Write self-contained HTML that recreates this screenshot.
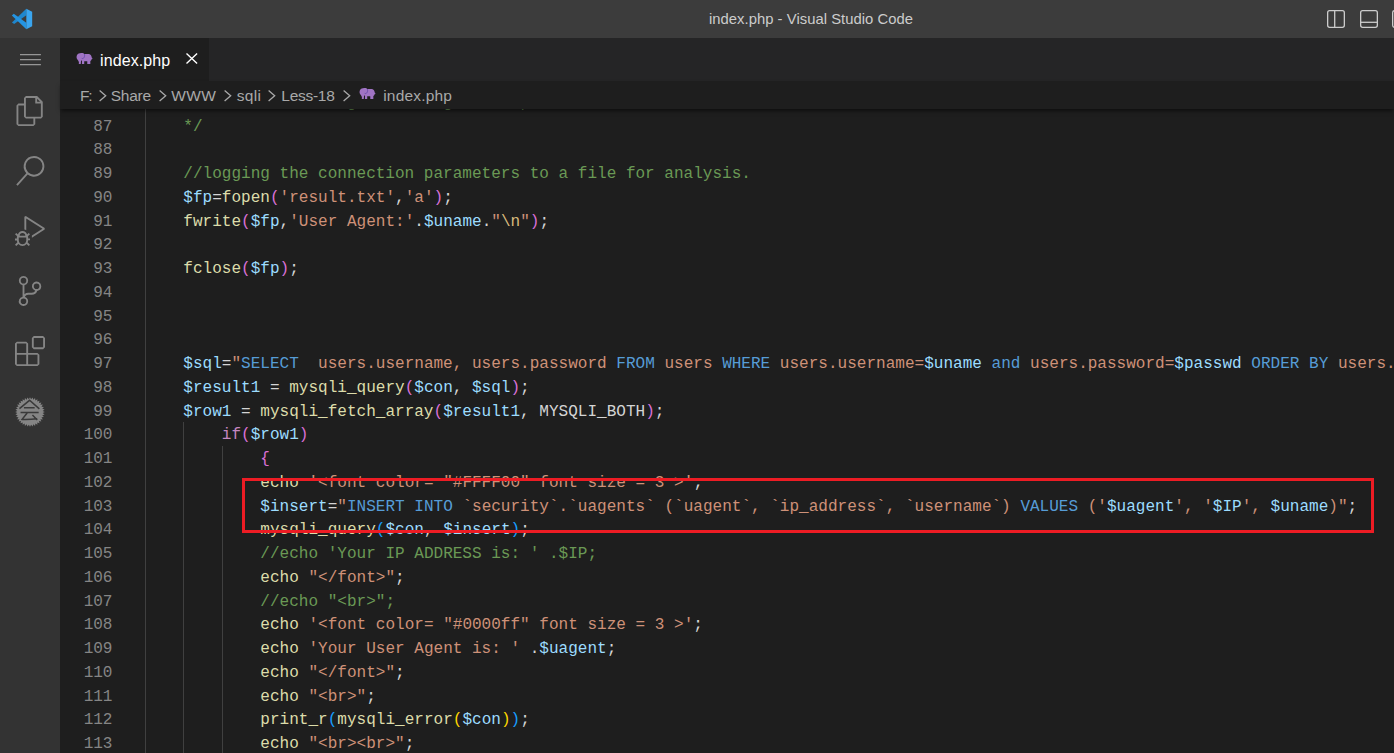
<!DOCTYPE html>
<html><head><meta charset="utf-8"><title>index.php - Visual Studio Code</title>
<style>
*{box-sizing:border-box;margin:0;padding:0}
html,body{width:1394px;height:753px;overflow:hidden;background:#1e1e1e}
body{position:relative;font-family:"Liberation Sans",sans-serif;color:#ccc}
#title{position:absolute;left:0;top:0;width:1394px;height:38px;background:#3c3c3c}
#title .t{position:absolute;left:0;width:1394px;top:10px;text-align:center;font-size:14.8px;letter-spacing:0.04px;line-height:18px;color:#cccccc;padding-left:228px}
#act{position:absolute;left:0;top:38px;width:60px;height:715px;background:#333333}
#tabs{position:absolute;left:60px;top:38px;width:1334px;height:43px;background:#252526}
#tab{position:absolute;left:0;top:0;width:149px;height:43px;background:#1e1e1e}
#tab .lbl{position:absolute;left:40px;top:13px;font-size:16px;letter-spacing:0.11px;line-height:20px;color:#ffffff}
#bc{position:absolute;left:60px;top:81px;width:1334px;height:28px;background:#1e1e1e;z-index:5;box-shadow:0 3px 4px -1px rgba(0,0,0,.55)}
#bc .i{position:absolute;top:5px;font-size:15.5px;line-height:20px;color:#a9a9a9;white-space:pre}
#ed{position:absolute;left:60px;top:109px;width:1334px;height:644px;background:#1e1e1e;overflow:hidden}
.ln{position:absolute;left:60px;width:52.5px;text-align:right;font-family:"Liberation Mono",monospace;font-size:16.044px;line-height:24px;height:24px;color:#858585;white-space:pre}
.cl{position:absolute;font-family:"Liberation Mono",monospace;font-size:16.044px;line-height:24px;height:24px;white-space:pre;color:#d4d4d4}
.v{color:#9cdcfe}.s{color:#ce9178}.k{color:#569cd6}.c{color:#6a9955}.p{color:#d4d4d4}
.e{color:#d7ba7d}.f{color:#dcdcaa}.kw{color:#c586c0}.b1{color:#ffd700}.b2{color:#da70d6}.b3{color:#179fff}
.g{position:absolute;width:1px;background:#404040}
#red{position:absolute;left:242px;top:478px;width:1132px;height:55px;border:3px solid #ed1c24;z-index:6}
svg{position:absolute;overflow:visible}
</style></head><body>
<div id="title">
<svg style="left:6px;top:4px" width="34" height="30" viewBox="0 0 853 753"><polygon points="510,120 510,283 205,502 148,462" fill="#1f86cd"/><polygon points="195,246 510,470 510,632 146,290" fill="#2494e2"/><polygon points="510,118 657,195 657,557 510,634" fill="#3aa5ef"/></svg>
<div class="t">index.php - Visual Studio Code</div>
<svg style="left:1327px;top:10px" width="18" height="18" viewBox="0 0 18 18" fill="none" stroke="#cccccc" stroke-width="1.3"><rect x="0.65" y="0.65" width="16.7" height="16.7" rx="2"/><path d="M7.7 0.65V17.35"/></svg>
<svg style="left:1360px;top:10px" width="18" height="18" viewBox="0 0 18 18" fill="none" stroke="#cccccc" stroke-width="1.3"><rect x="0.65" y="0.65" width="16.7" height="16.7" rx="2"/><path d="M0.65 12.3H17.35"/></svg>
<svg style="left:1392px;top:10px" width="18" height="18" viewBox="0 0 18 18" fill="none" stroke="#cccccc" stroke-width="1.3"><rect x="0.65" y="0.65" width="16.7" height="16.7" rx="2"/></svg>
</div>
<div id="act">
<svg style="left:19.5px;top:16px" width="21" height="12" viewBox="0 0 21 12"><path d="M0 0.7H20.9M0 5.7H20.9M0 10.7H20.9" stroke="#969696" stroke-width="1.25"/></svg>
<!-- files -->
<svg style="left:13.5px;top:58px" width="30" height="30" viewBox="0 0 24 24" fill="#858585"><path transform="translate(1 0)" d="M17.5 0h-9L7 1.5V6H2.5L1 7.5v15.07L2.5 24h12.07L16 22.57V18h4.7l1.3-1.43V4.5L17.5 0zm0 2.12l2.38 2.38H17.5V2.12zm-3 20.38h-12v-15H7v9.07L8.500 18h6v4.5zm6-6h-12v-15H16V6h4.5v10.5z"/></svg>
<!-- search -->
<svg style="left:15px;top:117.7px" width="30" height="30" viewBox="0 0 24 24" fill="#858585"><path d="M15.25 0a8.25 8.25 0 0 0-6.18 13.72L1 22.880l1.12 1 8.050-9.120A8.251 8.251 0 1 0 15.25.010V0zm0 15a6.75 6.75 0 1 1 0-13.5 6.75 6.75 0 0 1 0 13.5z"/></svg>
<!-- debug -->
<svg style="left:15px;top:178px" width="30" height="30" viewBox="0 0 24 24" fill="#858585"><path d="M10.94 13.5l-1.32 1.32a3.73 3.73 0 0 0-7.24 0L1.06 13.5 0 14.56l1.72 1.72-.22.22V18H0v1.5h1.5v.08c.077.489.214.966.41 1.42L0 22.94 1.06 24l1.65-1.65A4.308 4.308 0 0 0 6 24a4.310 4.310 0 0 0 3.290-1.650L10.940 24 12 22.940 10.090 21c.198-.464.336-.951.41-1.45v-.1H12V18h-1.5v-1.5l-.22-.22L12 14.56l-1.06-1.060zM6 13.500a2.250 2.250 0 0 1 2.250 2.250h-4.500A2.250 2.250 0 0 1 6 13.500zm3 6a3.330 3.330 0 0 1-3 3 3.330 3.330 0 0 1-3-3v-2.250h6v2.250zm14.760-9.900v1.260L13.500 17.370V15.600l8.500-5.370L9 2v9.460a5.070 5.070 0 0 0-1.500-.72V.630L8.640 0l15.120 9.600z"/></svg>
<!-- scm -->
<svg style="left:15.3px;top:238px" width="30" height="30" viewBox="0 0 24 24" fill="#858585"><path d="M21.007 8.222A3.738 3.738 0 0 0 15.045 5.2a3.737 3.737 0 0 0 1.156 6.583 2.988 2.988 0 0 1-2.668 1.670h-2.990a4.456 4.456 0 0 0-2.989 1.165V7.400a3.737 3.737 0 1 0-1.494 0v9.117a3.776 3.776 0 1 0 1.816.099 2.990 2.990 0 0 1 2.668-1.667h2.990a4.484 4.484 0 0 0 4.223-3.039 3.736 3.736 0 0 0 3.250-3.687zM4.565 3.738a2.242 2.242 0 1 1 4.484 0 2.242 2.242 0 0 1-4.484 0zm4.484 16.441a2.242 2.242 0 1 1-4.484 0 2.242 2.242 0 0 1 4.484 0zm8.221-9.715a2.242 2.242 0 1 1 0-4.485 2.242 2.242 0 0 1 0 4.485z"/></svg>
<!-- ext -->
<svg style="left:15px;top:298px" width="30" height="30" viewBox="0 0 24 24" fill="#858585"><path d="M13.5 1.5L15 0h7.5L24 1.5V9l-1.5 1.5H15L13.5 9V1.5zm1.5 0V9h7.5V1.5H15zM0 15V6l1.5-1.5H9L10.5 6v7.5H18l1.5 1.5v7.5L18 24H1.500L0 22.500V15zm9-1.500V6H1.500v7.500H9zM9 15H1.500v7.500H9V15zm1.500 7.500H18V15h-7.500v7.500z"/></svg>
<!-- gear -->
<svg style="left:16.35px;top:359.8px" width="28" height="28" viewBox="0 0 28 28"><polygon points="14.00,-0.80 15.11,1.35 16.57,-0.58 17.29,1.73 19.06,0.09 19.37,2.49 21.40,1.18 21.28,3.60 23.51,2.66 22.98,5.02 25.34,4.49 24.40,6.72 26.82,6.60 25.51,8.63 27.91,8.94 26.27,10.71 28.58,11.43 26.65,12.89 28.80,14.00 26.65,15.11 28.58,16.57 26.27,17.29 27.91,19.06 25.51,19.37 26.82,21.40 24.40,21.28 25.34,23.51 22.98,22.98 23.51,25.34 21.28,24.40 21.40,26.82 19.37,25.51 19.06,27.91 17.29,26.27 16.57,28.58 15.11,26.65 14.00,28.80 12.89,26.65 11.43,28.58 10.71,26.27 8.94,27.91 8.63,25.51 6.60,26.82 6.72,24.40 4.49,25.34 5.02,22.98 2.66,23.51 3.60,21.28 1.18,21.40 2.49,19.37 0.09,19.06 1.73,17.29 -0.58,16.57 1.35,15.11 -0.80,14.00 1.35,12.89 -0.58,11.43 1.73,10.71 0.09,8.94 2.49,8.63 1.18,6.60 3.60,6.72 2.66,4.49 5.02,5.02 4.49,2.66 6.72,3.60 6.60,1.18 8.63,2.49 8.94,0.09 10.71,1.73 11.43,-0.58 12.89,1.35" fill="#858585"/><path d="M3.45 10.6 L13.55 2.3 L23.35 10.9 M7.95 9.7H18.65 M4.55 14.6H22.65 M11.15 15 L6.15 21.4 Q14 21.6 21.25 20.8 M16.45 16.9 L21.25 21.9" fill="none" stroke="#3a3a3a" stroke-width="1.5" stroke-linejoin="miter"/></svg>
</div>
<div id="tabs"><div id="tab">
<svg style="left:12px;top:10px" width="28" height="20" viewBox="0 0 1054 753"><path d="M350 190C420 188 450 210 465 228L640 225C700 235 740 300 745 370L780 390L745 410C740 440 710 470 690 490L690 605L575 605L575 500L460 500L460 605L375 605L375 480C365 470 350 470 340 490L330 600L255 600C275 540 250 480 210 440C170 400 160 330 185 270C210 215 280 190 350 190Z" fill="#a074c4"/><path d="M470 228C482 290 472 350 430 385C410 400 385 400 365 390" fill="none" stroke="#5a3fa6" stroke-width="26"/></svg>
<div class="lbl">index.php</div>
<svg style="left:125.6px;top:14.9px" width="11.6" height="11" viewBox="0 0 11.6 11"><path d="M0.5 0.5L11.1 10.5M11.1 0.5L0.5 10.5" stroke="#ffffff" stroke-width="1.4"/></svg>
</div></div>
<div id="bc">
<div class="i" style="left:19.9px;letter-spacing:-1.137px">F:</div>
<div class="i" style="left:50.7px;letter-spacing:-0.233px">Share</div>
<div class="i" style="left:111.3px;letter-spacing:0.337px">WWW</div>
<div class="i" style="left:176.7px;letter-spacing:0.360px">sqli</div>
<div class="i" style="left:221.3px;letter-spacing:-0.278px">Less-18</div>
<div class="i" style="left:323.2px;letter-spacing:0.197px">index.php</div>
<svg style="left:38.7px;top:8.6px" width="7.4" height="11.4" viewBox="0 0 7.4 11.4"><path d="M0.6 0.4L6.7 5.7L0.6 11" fill="none" stroke="#a9a9a9" stroke-width="1.3"/></svg>
<svg style="left:99.0px;top:8.6px" width="7.4" height="11.4" viewBox="0 0 7.4 11.4"><path d="M0.6 0.4L6.7 5.7L0.6 11" fill="none" stroke="#a9a9a9" stroke-width="1.3"/></svg>
<svg style="left:164.2px;top:8.6px" width="7.4" height="11.4" viewBox="0 0 7.4 11.4"><path d="M0.6 0.4L6.7 5.7L0.6 11" fill="none" stroke="#a9a9a9" stroke-width="1.3"/></svg>
<svg style="left:208.0px;top:8.6px" width="7.4" height="11.4" viewBox="0 0 7.4 11.4"><path d="M0.6 0.4L6.7 5.7L0.6 11" fill="none" stroke="#a9a9a9" stroke-width="1.3"/></svg>
<svg style="left:282.9px;top:8.6px" width="7.4" height="11.4" viewBox="0 0 7.4 11.4"><path d="M0.6 0.4L6.7 5.7L0.6 11" fill="none" stroke="#a9a9a9" stroke-width="1.3"/></svg>
<svg style="left:294.85px;top:2.15px" width="28" height="20" viewBox="0 0 1054 753"><path d="M350 190C420 188 450 210 465 228L640 225C700 235 740 300 745 370L780 390L745 410C740 440 710 470 690 490L690 605L575 605L575 500L460 500L460 605L375 605L375 480C365 470 350 470 340 490L330 600L255 600C275 540 250 480 210 440C170 400 160 330 185 270C210 215 280 190 350 190Z" fill="#a074c4"/><path d="M470 228C482 290 472 350 430 385C410 400 385 400 365 390" fill="none" stroke="#5a3fa6" stroke-width="26"/></svg>
</div>
<div class="g" style="left:145px;top:109px;height:644px"></div>
<div class="g" style="left:183px;top:422px;height:331px"></div>
<div class="g" style="left:222px;top:446px;height:307px"></div>
<div class="ln" style="top:91px">86</div>
<div class="cl" style="top:91px;left:144.85px"><span class="c">                     g         g       ,</span></div>
<div class="ln" style="top:115px">87</div>
<div class="cl" style="top:115px;left:183.35px"><span class="c">*/</span></div>
<div class="ln" style="top:138px">88</div>
<div class="ln" style="top:162px">89</div>
<div class="cl" style="top:162px;left:183.35px"><span class="c">//logging the connection parameters to a file for analysis.</span></div>
<div class="ln" style="top:186px">90</div>
<div class="cl" style="top:186px;left:183.35px"><span class="v">$fp</span><span class="p">=</span><span class="f">fopen</span><span class="b2">(</span><span class="s">&#x27;result.txt&#x27;</span><span class="p">,</span><span class="s">&#x27;a&#x27;</span><span class="b2">)</span><span class="p">;</span></div>
<div class="ln" style="top:210px">91</div>
<div class="cl" style="top:210px;left:183.35px"><span class="f">fwrite</span><span class="b2">(</span><span class="v">$fp</span><span class="p">,</span><span class="s">&#x27;User Agent:&#x27;</span><span class="p">.</span><span class="v">$uname</span><span class="p">.</span><span class="s">&quot;</span><span class="e">\n</span><span class="s">&quot;</span><span class="b2">)</span><span class="p">;</span></div>
<div class="ln" style="top:233px">92</div>
<div class="ln" style="top:257px">93</div>
<div class="cl" style="top:257px;left:183.35px"><span class="f">fclose</span><span class="b2">(</span><span class="v">$fp</span><span class="b2">)</span><span class="p">;</span></div>
<div class="ln" style="top:281px">94</div>
<div class="ln" style="top:305px">95</div>
<div class="ln" style="top:328px">96</div>
<div class="ln" style="top:352px">97</div>
<div class="cl" style="top:352px;left:183.35px"><span class="v">$sql</span><span class="p">=</span><span class="s">&quot;</span><span class="k">SELECT</span><span class="s">  users.username, users.password </span><span class="k">FROM</span><span class="s"> users </span><span class="k">WHERE</span><span class="s"> users.username=</span><span class="v">$uname</span><span class="s"> </span><span class="k">and</span><span class="s"> users.password=</span><span class="v">$passwd</span><span class="s"> </span><span class="k">ORDER BY</span><span class="s"> users.id</span></div>
<div class="ln" style="top:376px">98</div>
<div class="cl" style="top:376px;left:183.35px"><span class="v">$result1</span><span class="p"> = </span><span class="f">mysqli_query</span><span class="b2">(</span><span class="v">$con</span><span class="p">, </span><span class="v">$sql</span><span class="b2">)</span><span class="p">;</span></div>
<div class="ln" style="top:400px">99</div>
<div class="cl" style="top:400px;left:183.35px"><span class="v">$row1</span><span class="p"> = </span><span class="f">mysqli_fetch_array</span><span class="b2">(</span><span class="v">$result1</span><span class="p">, MYSQLI_BOTH</span><span class="b2">)</span><span class="p">;</span></div>
<div class="ln" style="top:423px">100</div>
<div class="cl" style="top:423px;left:221.85px"><span class="kw">if</span><span class="b2">(</span><span class="v">$row1</span><span class="b2">)</span></div>
<div class="ln" style="top:447px">101</div>
<div class="cl" style="top:447px;left:260.35px"><span class="b2">{</span></div>
<div class="ln" style="top:471px">102</div>
<div class="cl" style="top:471px;left:260.35px"><span class="f">echo </span><span class="p"></span><span class="s">&#x27;&lt;font color= &quot;#FFFF00&quot; font size = 3 &gt;&#x27;</span><span class="p">;</span></div>
<div class="ln" style="top:495px">103</div>
<div class="cl" style="top:495px;left:260.35px"><span class="v">$insert</span><span class="p">=</span><span class="s">&quot;</span><span class="k">INSERT INTO</span><span class="s"> `security`.`uagents` (`uagent`, `ip_address`, `username`) </span><span class="k">VALUES</span><span class="s"> (&#x27;</span><span class="v">$uagent</span><span class="s">&#x27;, &#x27;</span><span class="v">$IP</span><span class="s">&#x27;, </span><span class="v">$uname</span><span class="s">)&quot;</span><span class="p">;</span></div>
<div class="ln" style="top:518px">104</div>
<div class="cl" style="top:518px;left:260.35px"><span class="f">mysqli_query</span><span class="b3">(</span><span class="v">$con</span><span class="p">, </span><span class="v">$insert</span><span class="b3">)</span><span class="p">;</span></div>
<div class="ln" style="top:542px">105</div>
<div class="cl" style="top:542px;left:260.35px"><span class="c">//echo &#x27;Your IP ADDRESS is: &#x27; .$IP;</span></div>
<div class="ln" style="top:566px">106</div>
<div class="cl" style="top:566px;left:260.35px"><span class="f">echo </span><span class="p"></span><span class="s">&quot;&lt;/font&gt;&quot;</span><span class="p">;</span></div>
<div class="ln" style="top:590px">107</div>
<div class="cl" style="top:590px;left:260.35px"><span class="c">//echo &quot;&lt;br&gt;&quot;;</span></div>
<div class="ln" style="top:613px">108</div>
<div class="cl" style="top:613px;left:260.35px"><span class="f">echo </span><span class="p"></span><span class="s">&#x27;&lt;font color= &quot;#0000ff&quot; font size = 3 &gt;&#x27;</span><span class="p">;</span></div>
<div class="ln" style="top:637px">109</div>
<div class="cl" style="top:637px;left:260.35px"><span class="f">echo </span><span class="p"></span><span class="s">&#x27;Your User Agent is: &#x27;</span><span class="p"> .</span><span class="v">$uagent</span><span class="p">;</span></div>
<div class="ln" style="top:661px">110</div>
<div class="cl" style="top:661px;left:260.35px"><span class="f">echo </span><span class="p"></span><span class="s">&quot;&lt;/font&gt;&quot;</span><span class="p">;</span></div>
<div class="ln" style="top:685px">111</div>
<div class="cl" style="top:685px;left:260.35px"><span class="f">echo </span><span class="p"></span><span class="s">&quot;&lt;br&gt;&quot;</span><span class="p">;</span></div>
<div class="ln" style="top:708px">112</div>
<div class="cl" style="top:708px;left:260.35px"><span class="f">print_r</span><span class="b3">(</span><span class="f">mysqli_error</span><span class="b1">(</span><span class="v">$con</span><span class="b1">)</span><span class="b3">)</span><span class="p">;</span></div>
<div class="ln" style="top:732px">113</div>
<div class="cl" style="top:732px;left:260.35px"><span class="f">echo </span><span class="p"></span><span class="s">&quot;&lt;br&gt;&lt;br&gt;&quot;</span><span class="p">;</span></div>
<div id="red"></div>
</body></html>
